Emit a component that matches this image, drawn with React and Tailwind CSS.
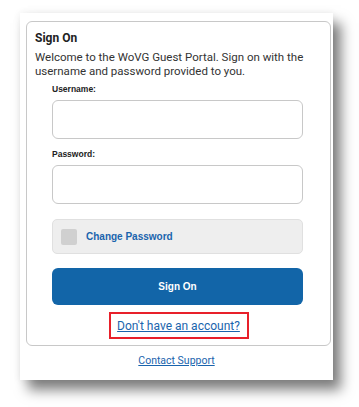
import React from 'react';

const App = () => {
    return (
        <div className="w-[359px] h-[407px] bg-white overflow-hidden pt-[13px] pl-[20px]" style={{ fontFamily: 'Roboto, "Liberation Sans", sans-serif' }}>
            {/* Outer panel */}
            <div className="w-[313px] h-[367px] bg-white flex flex-col shadow-[8px_10px_12px_rgba(0,0,0,0.5),0_0_8px_rgba(0,0,0,0.07)]">
                {/* Card */}
                <div className="mt-[8px] ml-[6px] mr-[2px] h-[325px] border border-[#c8c8c8] rounded-[6px] flex flex-col">
                    <div className="pl-[8px] pr-[4px] pt-[8px]">
                        <h2 className="text-[12px] font-bold leading-[16px] text-[#222]">Sign On</h2>
                        <p className="mt-[4px] text-[11.5px] leading-[14px] text-[#333]">
                            Welcome to the WoVG Guest Portal. Sign on with the username and password provided to you.
                        </p>
                    </div>

                    {/* Form */}
                    <div className="ml-[25px] mr-[27px] mt-[6px] flex flex-col" style={{ fontFamily: '"Liberation Sans", Arial, sans-serif' }}>
                        <label className="text-[8.5px] font-bold leading-[10px] text-[#222]">Username:</label>
                        <input className="mt-[6px] h-[39px] border border-[#c8c8c8] rounded-[6px] bg-white outline-none" />

                        <label className="mt-[10px] text-[8.5px] font-bold leading-[10px] text-[#222]">Password:</label>
                        <input type="password" className="mt-[6px] h-[39px] border border-[#c8c8c8] rounded-[6px] bg-white outline-none" />

                        <div className="mt-[15px] h-[35px] bg-[#eeeeee] border border-[#e0e0e0] rounded-[5px] flex items-center pl-[8px] gap-[9px]">
                            <span className="w-[16px] h-[16px] bg-[#d0d0d0] rounded-[2px]"></span>
                            <span className="text-[10px] font-bold text-[#1a64ad]">Change Password</span>
                        </div>

                        <button className="mt-[14px] h-[37px] bg-[#1265a8] rounded-[6px] text-white text-[10px] font-bold">
                            Sign On
                        </button>
                    </div>

                    <div className="flex justify-center mt-[7px]">
                        <a href="#" className="w-[140px] h-[27px] border-2 border-[#e8202a] flex items-center justify-center text-[12px] text-[#1a64ad] underline" style={{ fontFamily: 'Roboto, sans-serif' }}>
                            Don't have an account?
                        </a>
                    </div>
                </div>

                <div className="flex justify-center mt-[8px]">
                    <a href="#" className="text-[10.5px] leading-[13px] text-[#1a64ad] underline" style={{ fontFamily: 'Roboto, sans-serif' }}>
                        Contact Support
                    </a>
                </div>
            </div>
        </div>
    );
};

export default App;
